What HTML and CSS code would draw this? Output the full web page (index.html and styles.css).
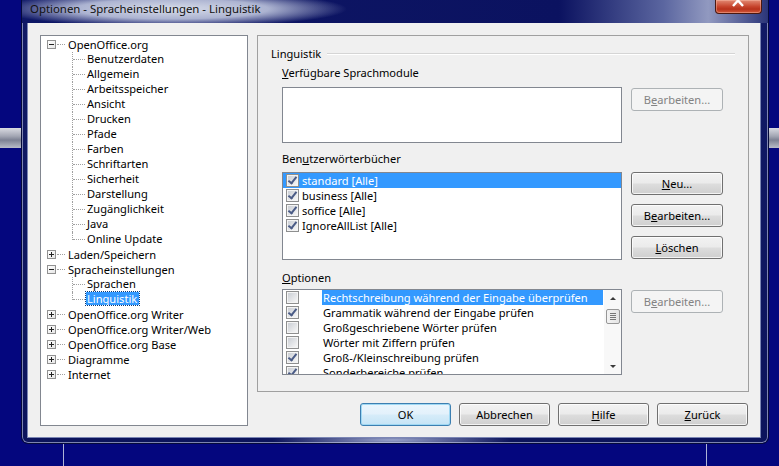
FILE: index.html
```html
<!DOCTYPE html>
<html lang="de">
  <head>
    <meta charset="UTF-8" />
    <title>Optionen - Spracheinstellungen - Linguistik</title>
    <link rel="stylesheet" href="styles.css">
  </head>
  <body>
    <div class="desktop">
      <div class="bg-bar"></div>
      <div class="bg-line line-left"></div>
      <div class="bg-line line-right"></div>

      <div class="window">
        <div class="titlebar">
          <span class="title">Optionen - Spracheinstellungen - Linguistik</span>
          <div class="close-btn">
            <svg width="47" height="14" viewBox="0 0 47 14">
              <path d="M18 -4 L28 7 M28 -4 L18 7" stroke="#fff" stroke-width="2.4" fill="none" />
            </svg>
          </div>
        </div>

        <div class="client">
          <div class="tree">
            <div class="node"><span class="exp minus"></span><span class="conn"></span>OpenOffice.org</div>
            <div class="kids">
              <div class="leaf">Benutzerdaten</div>
              <div class="leaf">Allgemein</div>
              <div class="leaf">Arbeitsspeicher</div>
              <div class="leaf">Ansicht</div>
              <div class="leaf">Drucken</div>
              <div class="leaf">Pfade</div>
              <div class="leaf">Farben</div>
              <div class="leaf">Schriftarten</div>
              <div class="leaf">Sicherheit</div>
              <div class="leaf">Darstellung</div>
              <div class="leaf">Zugänglichkeit</div>
              <div class="leaf">Java</div>
              <div class="leaf">Online Update</div>
            </div>
            <div class="node"><span class="exp plus"></span><span class="conn"></span>Laden/Speichern</div>
            <div class="node"><span class="exp minus"></span><span class="conn"></span>Spracheinstellungen</div>
            <div class="kids">
              <div class="leaf">Sprachen</div>
              <div class="leaf"><span class="selected">Linguistik</span></div>
            </div>
            <div class="node"><span class="exp plus"></span><span class="conn"></span>OpenOffice.org Writer</div>
            <div class="node"><span class="exp plus"></span><span class="conn"></span>OpenOffice.org Writer/Web</div>
            <div class="node"><span class="exp plus"></span><span class="conn"></span>OpenOffice.org Base</div>
            <div class="node"><span class="exp plus"></span><span class="conn"></span>Diagramme</div>
            <div class="node"><span class="exp plus"></span><span class="conn"></span>Internet</div>
          </div>

          <div class="right-col">
            <div class="page">
              <div class="group-head"><span>Linguistik</span><span class="head-line"></span></div>

              <div class="label"><u>V</u>erfügbare Sprachmodule</div>
              <div class="section first">
                <div class="listbox modules"></div>
                <div class="side-buttons">
                  <button class="btn disabled">B<u>e</u>arbeiten...</button>
                </div>
              </div>

              <div class="label l2">Ben<u>u</u>tzerwörterbücher</div>
              <div class="section second">
                <div class="listbox dicts">
                  <div class="row sel"><span class="cb on"></span>standard [Alle]</div>
                  <div class="row"><span class="cb on"></span>business [Alle]</div>
                  <div class="row"><span class="cb on"></span>soffice [Alle]</div>
                  <div class="row"><span class="cb on"></span>IgnoreAllList [Alle]</div>
                </div>
                <div class="side-buttons stack">
                  <button class="btn"><u>N</u>eu...</button>
                  <button class="btn">B<u>e</u>arbeiten...</button>
                  <button class="btn"><u>L</u>öschen</button>
                </div>
              </div>

              <div class="label l3"><u>O</u>ptionen</div>
              <div class="section third">
                <div class="listbox options">
                  <div class="opt-rows">
                    <div class="orow"><span class="cb"></span><span class="otext sel">Rechtschreibung während der Eingabe überprüfen</span></div>
                    <div class="orow"><span class="cb on"></span><span class="otext">Grammatik während der Eingabe prüfen</span></div>
                    <div class="orow"><span class="cb"></span><span class="otext">Großgeschriebene Wörter prüfen</span></div>
                    <div class="orow"><span class="cb"></span><span class="otext">Wörter mit Ziffern prüfen</span></div>
                    <div class="orow"><span class="cb on"></span><span class="otext">Groß-/Kleinschreibung prüfen</span></div>
                    <div class="orow"><span class="cb on"></span><span class="otext">Sonderbereiche prüfen</span></div>
                  </div>
                  <div class="scrollbar">
                    <div class="sb-arrow up"></div>
                    <div class="sb-track"><div class="sb-thumb"><i></i><i></i><i></i><i></i></div></div>
                    <div class="sb-arrow down"></div>
                  </div>
                </div>
                <div class="side-buttons">
                  <button class="btn disabled">B<u>e</u>arbeiten...</button>
                </div>
              </div>
            </div>

            <div class="dialog-buttons">
              <button class="btn default">OK</button>
              <button class="btn">Abbrechen</button>
              <button class="btn"><u>H</u>ilfe</button>
              <button class="btn"><u>Z</u>urück</button>
            </div>
          </div>
        </div>
      </div>
    </div>
  </body>
</html>
```

FILE: styles.css
```css
body {
  margin: 0;
  background: #04067e;
  font-family: "Segoe UI", "Noto Sans", sans-serif;
  font-size: 11.1px;
  color: #000;
}

.desktop {
  position: relative;
  width: 779px;
  height: 466px;
  overflow: hidden;
  background: #04067e;
}

/* stuff behind the dialog */
.bg-bar {
  position: absolute;
  left: 0;
  right: 0;
  top: 128px;
  height: 20px;
  background: linear-gradient(#d9dbe2, #a4a7b4 40%, #7d8193 60%, #b9bcc8);
}

.bg-line {
  position: absolute;
  top: 0;
  bottom: 0;
  width: 1px;
  background: #aeb3d6;
}

.line-left { left: 63px; }
.line-right { left: 706px; }

/* the dialog window */
.window {
  position: absolute;
  left: 22px;
  top: 0;
  width: 746px;
  height: 443px;
  box-sizing: border-box;
  display: flex;
  flex-direction: column;
  border-radius: 0 0 6px 6px;
  background:
    radial-gradient(ellipse 120px 8px at 370px 440px, rgba(190, 200, 230, 0.8), rgba(190, 200, 230, 0)),
    linear-gradient(#111a66, #0c145c);
  box-shadow: 0 0 0 1px #050a3a, inset 0 0 0 1px rgba(220, 226, 245, 0.55);
}

.titlebar {
  position: relative;
  height: 23px;
  background:
    radial-gradient(ellipse 175px 18px at 150px 9px, rgba(222, 227, 238, 0.97) 0%, rgba(200, 207, 228, 0.85) 55%, rgba(200, 207, 228, 0) 100%),
    linear-gradient(to right, #0e1766 0%, #0b1260 72%, #5b66a0 86%, #9199c0 92%, #2b3579 100%);
}

.title {
  position: absolute;
  left: 8px;
  top: 1px;
  line-height: 16px;
  font-size: 11.4px;
  color: #111;
}

.close-btn {
  position: absolute;
  left: 693px;
  top: 0;
  width: 47px;
  height: 14px;
  box-sizing: border-box;
  border: 1px solid #4a1810;
  border-top: none;
  border-radius: 0 0 4px 4px;
  background: linear-gradient(#e28a73, #c7452d 50%, #b8321b 70%, #d35a3c);
  box-shadow: inset 0 0 0 1px rgba(255, 200, 180, 0.4);
}

.close-btn svg {
  display: block;
  margin: -1px 0 0 -1px;
}

.client {
  margin: 0 8px 6px 6px;
  height: 414px;
  box-sizing: border-box;
  padding: 12px 11px 0 12px;
  background: #f0f0f0;
  display: flex;
  gap: 9px;
  box-shadow: 0 0 0 1px #7b86b4;
}

/* tree on the left */
.tree {
  width: 208px;
  height: 391px;
  box-sizing: border-box;
  border: 1px solid #828790;
  background: #fff;
  padding-top: 1px;
}

.node, .leaf {
  height: 15px;
  line-height: 14px;
  white-space: nowrap;
}

.node {
  display: flex;
  align-items: center;
}

.exp {
  position: relative;
  width: 9px;
  height: 9px;
  box-sizing: border-box;
  margin-left: 6px;
  border: 1px solid #919191;
  background: linear-gradient(135deg, #fff, #e6e6e6);
}

.exp::before {
  content: '';
  position: absolute;
  left: 1px;
  top: 3px;
  width: 5px;
  height: 1px;
  background: #222;
}

.exp.plus::after {
  content: '';
  position: absolute;
  left: 3px;
  top: 1px;
  width: 1px;
  height: 5px;
  background: #222;
}

.conn {
  width: 8px;
  margin: 0 3px 0 1px;
  border-top: 1px dotted #a0a0a0;
}

.kids {
  margin-left: 31px;
}

.leaf {
  position: relative;
  padding-left: 15px;
}

.leaf::before {
  content: '';
  position: absolute;
  left: 0;
  top: 0;
  height: 15px;
  border-left: 1px dotted #a0a0a0;
}

.leaf:last-child::before {
  height: 8px;
}

.leaf::after {
  content: '';
  position: absolute;
  left: 1px;
  top: 7px;
  width: 12px;
  border-top: 1px dotted #a0a0a0;
}

.selected {
  display: inline-block;
  margin-left: -1px;
  padding: 0 2px 0 1px;
  line-height: 13px;
  background: #3399ff;
  color: #fff;
  outline: 1px dotted #0b3a78;
}

/* right side */
.right-col {
  width: 492px;
  display: flex;
  flex-direction: column;
}

.page {
  height: 357px;
  box-sizing: border-box;
  border: 1px solid #a0a0a0;
  padding-top: 10px;
}

.group-head {
  display: flex;
  align-items: center;
  height: 15px;
  line-height: 15px;
  margin: 0 13px;
}

.head-line {
  flex: 1;
  margin-left: 6px;
  height: 0;
  border-top: 1px solid #d5d5d5;
  border-bottom: 1px solid #fff;
}

.label {
  height: 15px;
  line-height: 14px;
  margin: 5px 0 0 24px;
}

.label.l2 { margin-top: 9px; }
.label.l3 { margin-top: 11px; }

.section {
  display: flex;
  gap: 9px;
  margin-left: 24px;
}

.section.first { margin-top: 6px; height: 56px; }
.section.second { margin-top: 5px; height: 88px; }
.section.third { margin-top: 3px; height: 86px; }

.listbox {
  width: 340px;
  box-sizing: border-box;
  border: 1px solid #828790;
  background: #fff;
}

.side-buttons {
  display: flex;
  flex-direction: column;
  gap: 9px;
  padding-top: 1px;
}

.side-buttons.stack {
  padding-top: 0;
}

.btn {
  width: 92px;
  height: 23px;
  box-sizing: border-box;
  padding: 0;
  font-family: inherit;
  font-size: 11.1px;
  color: #000;
  border: 1px solid #707070;
  border-radius: 3px;
  background: linear-gradient(#f2f2f2 0%, #ebebeb 48%, #dddddd 52%, #cfcfcf 100%);
  box-shadow: inset 0 0 0 1px rgba(255, 255, 255, 0.75);
}

.btn.disabled {
  color: #838383;
  border-color: #adb2b5;
  background: #f4f4f4;
  box-shadow: none;
}

.btn.default {
  border-color: #3c7fb1;
  background: linear-gradient(#eaf6fd 0%, #e3f1fb 48%, #d6ecf9 52%, #c5e4f6 100%);
  box-shadow: inset 0 0 0 1px #9fd8f3;
}

/* checkbox */
.cb {
  position: relative;
  flex: none;
  width: 13px;
  height: 13px;
  box-sizing: border-box;
  border: 1px solid #8e8f8f;
  background: #f4f4f4;
}

.cb::before {
  content: '';
  position: absolute;
  left: 1px;
  top: 1px;
  width: 9px;
  height: 9px;
  background: linear-gradient(135deg, #cbcfd5, #f6f6f6);
}

.cb.on::after {
  content: '';
  position: absolute;
  left: 3px;
  top: 0;
  width: 3px;
  height: 7px;
  border: solid #4a5b86;
  border-width: 0 2px 2px 0;
  transform: rotate(38deg);
}

/* dictionaries list */
.row {
  display: flex;
  align-items: center;
  gap: 3px;
  height: 15px;
  line-height: 15px;
  padding-left: 3px;
  white-space: nowrap;
}

.row.sel {
  background: #3399ff;
  color: #fff;
}

/* options list */
.listbox.options {
  display: flex;
  overflow: hidden;
}

.opt-rows {
  flex: 1;
  overflow: hidden;
}

.orow {
  display: flex;
  align-items: center;
  height: 15px;
  line-height: 15px;
  padding-left: 3px;
  white-space: nowrap;
}

.otext {
  margin-left: 23px;
  padding: 0 2px 0 1px;
}

.otext.sel {
  flex: 1;
  margin-right: 1px;
  background: #3399ff;
  color: #fff;
}

.scrollbar {
  width: 17px;
  display: flex;
  flex-direction: column;
  background: #f8f8f8;
}

.sb-arrow {
  position: relative;
  height: 17px;
}

.sb-arrow::after {
  content: '';
  position: absolute;
  left: 6px;
  border-left: 3px solid transparent;
  border-right: 3px solid transparent;
}

.sb-arrow.up::after {
  top: 7px;
  border-bottom: 3px solid #3a3a3a;
}

.sb-arrow.down::after {
  top: 8px;
  border-top: 3px solid #3a3a3a;
}

.sb-track {
  flex: 1;
  padding: 2px 1px 0 2px;
}

.sb-thumb {
  height: 15px;
  box-sizing: border-box;
  border: 1px solid #979797;
  border-radius: 2px;
  background: linear-gradient(to right, #f3f3f3, #e4e4e4);
  padding-top: 3px;
}

.sb-thumb i {
  display: block;
  width: 6px;
  height: 1px;
  margin: 0 auto 1px;
  background: #777;
}

.dialog-buttons {
  display: flex;
  justify-content: flex-end;
  gap: 8px;
  margin-top: 11px;
  padding-right: 1px;
}

.dialog-buttons .btn {
  width: 91px;
}
```
